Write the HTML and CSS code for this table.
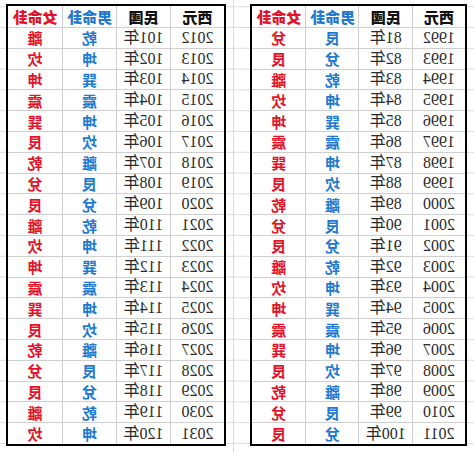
FILE: index.html
```html
<!DOCTYPE html>
<html lang="zh-Hant">
<head>
<meta charset="utf-8">
<title>命卦表</title>
<link rel="stylesheet" href="styles.css">
</head>
<body>
<div class="sheet">
  <div class="tables">
    <div class="tbl tbl-a">
      <div class="c h">西元</div><div class="c h">民國</div><div class="c h m">男命卦</div><div class="c h f">女命卦</div>
      <div class="c n">1992</div><div class="c n">81年</div><div class="c k m">艮</div><div class="c k f">兌</div>
      <div class="c n">1993</div><div class="c n">82年</div><div class="c k m">兌</div><div class="c k f">艮</div>
      <div class="c n">1994</div><div class="c n">83年</div><div class="c k m">乾</div><div class="c k f">離</div>
      <div class="c n">1995</div><div class="c n">84年</div><div class="c k m">坤</div><div class="c k f">坎</div>
      <div class="c n">1996</div><div class="c n">85年</div><div class="c k m">巽</div><div class="c k f">坤</div>
      <div class="c n">1997</div><div class="c n">86年</div><div class="c k m">震</div><div class="c k f">震</div>
      <div class="c n">1998</div><div class="c n">87年</div><div class="c k m">坤</div><div class="c k f">巽</div>
      <div class="c n">1999</div><div class="c n">88年</div><div class="c k m">坎</div><div class="c k f">艮</div>
      <div class="c n">2000</div><div class="c n">89年</div><div class="c k m">離</div><div class="c k f">乾</div>
      <div class="c n">2001</div><div class="c n">90年</div><div class="c k m">艮</div><div class="c k f">兌</div>
      <div class="c n">2002</div><div class="c n">91年</div><div class="c k m">兌</div><div class="c k f">艮</div>
      <div class="c n">2003</div><div class="c n">92年</div><div class="c k m">乾</div><div class="c k f">離</div>
      <div class="c n">2004</div><div class="c n">93年</div><div class="c k m">坤</div><div class="c k f">坎</div>
      <div class="c n">2005</div><div class="c n">94年</div><div class="c k m">巽</div><div class="c k f">坤</div>
      <div class="c n">2006</div><div class="c n">95年</div><div class="c k m">震</div><div class="c k f">震</div>
      <div class="c n">2007</div><div class="c n">96年</div><div class="c k m">坤</div><div class="c k f">巽</div>
      <div class="c n">2008</div><div class="c n">97年</div><div class="c k m">坎</div><div class="c k f">艮</div>
      <div class="c n">2009</div><div class="c n">98年</div><div class="c k m">離</div><div class="c k f">乾</div>
      <div class="c n">2010</div><div class="c n">99年</div><div class="c k m">艮</div><div class="c k f">兌</div>
      <div class="c n">2011</div><div class="c n">100年</div><div class="c k m">兌</div><div class="c k f">艮</div>
    </div>
    <div class="tbl tbl-b">
      <div class="c h">西元</div><div class="c h">民國</div><div class="c h m">男命卦</div><div class="c h f">女命卦</div>
      <div class="c n">2012</div><div class="c n">101年</div><div class="c k m">乾</div><div class="c k f">離</div>
      <div class="c n">2013</div><div class="c n">102年</div><div class="c k m">坤</div><div class="c k f">坎</div>
      <div class="c n">2014</div><div class="c n">103年</div><div class="c k m">巽</div><div class="c k f">坤</div>
      <div class="c n">2015</div><div class="c n">104年</div><div class="c k m">震</div><div class="c k f">震</div>
      <div class="c n">2016</div><div class="c n">105年</div><div class="c k m">坤</div><div class="c k f">巽</div>
      <div class="c n">2017</div><div class="c n">106年</div><div class="c k m">坎</div><div class="c k f">艮</div>
      <div class="c n">2018</div><div class="c n">107年</div><div class="c k m">離</div><div class="c k f">乾</div>
      <div class="c n">2019</div><div class="c n">108年</div><div class="c k m">艮</div><div class="c k f">兌</div>
      <div class="c n">2020</div><div class="c n">109年</div><div class="c k m">兌</div><div class="c k f">艮</div>
      <div class="c n">2021</div><div class="c n">110年</div><div class="c k m">乾</div><div class="c k f">離</div>
      <div class="c n">2022</div><div class="c n">111年</div><div class="c k m">坤</div><div class="c k f">坎</div>
      <div class="c n">2023</div><div class="c n">112年</div><div class="c k m">巽</div><div class="c k f">坤</div>
      <div class="c n">2024</div><div class="c n">113年</div><div class="c k m">震</div><div class="c k f">震</div>
      <div class="c n">2025</div><div class="c n">114年</div><div class="c k m">坤</div><div class="c k f">巽</div>
      <div class="c n">2026</div><div class="c n">115年</div><div class="c k m">坎</div><div class="c k f">艮</div>
      <div class="c n">2027</div><div class="c n">116年</div><div class="c k m">離</div><div class="c k f">乾</div>
      <div class="c n">2028</div><div class="c n">117年</div><div class="c k m">艮</div><div class="c k f">兌</div>
      <div class="c n">2029</div><div class="c n">118年</div><div class="c k m">兌</div><div class="c k f">艮</div>
      <div class="c n">2030</div><div class="c n">119年</div><div class="c k m">乾</div><div class="c k f">離</div>
      <div class="c n">2031</div><div class="c n">120年</div><div class="c k m">坤</div><div class="c k f">坎</div>
    </div>
  </div>
</div>
</body>
</html>
```

FILE: styles.css
```css
html, body {
  margin: 0;
  padding: 0;
  background: #fff;
}

.sheet {
  width: 474px;
  height: 452px;
  overflow: hidden;
  transform: scaleX(-1);
  transform-origin: center;
  background-color: #fff;
  background-image:
    linear-gradient(to right, transparent 240px, #d8d8d8 240px, #d8d8d8 241px, transparent 241px),
    linear-gradient(to bottom, #dcdcdc 1px, transparent 1px);
  background-size: 100% 100%, 100% 20.8px;
  background-position: 0 0, 0 27px;
  background-repeat: no-repeat, repeat-y;
}

.tables {
  display: flex;
  gap: 24px;
  padding: 4px 0 0 7px;
}

.tbl {
  display: grid;
  grid-template-columns: repeat(4, 1fr);
  grid-template-rows: 22px repeat(20, 20.8px);
  border: 2px solid #000;
  background: #fff;
}

.tbl-a { width: 213px; }
.tbl-b { width: 216px; }

.c {
  display: flex;
  align-items: center;
  justify-content: center;
  border-right: 1px solid #cfcfcf;
  border-bottom: 1px solid #cfcfcf;
  box-sizing: border-box;
  white-space: nowrap;
  line-height: 1;
}

.c:nth-child(4n) { border-right: none; }
.c:nth-last-child(-n+4) { border-bottom: none; }

.h {
  font-family: "Noto Sans CJK TC", "Noto Sans CJK SC", sans-serif;
  font-weight: 900;
  font-size: 15px;
  color: #111;
}

.n {
  font-family: "Liberation Serif", "Noto Sans CJK TC", serif;
  font-size: 16px;
  color: #2a2a2a;
}

.k {
  font-family: "Noto Sans CJK TC", "Noto Sans CJK SC", sans-serif;
  font-weight: 700;
  font-size: 15px;
}

.m { color: #1f7ad0; }
.f { color: #e3142a; }
```
